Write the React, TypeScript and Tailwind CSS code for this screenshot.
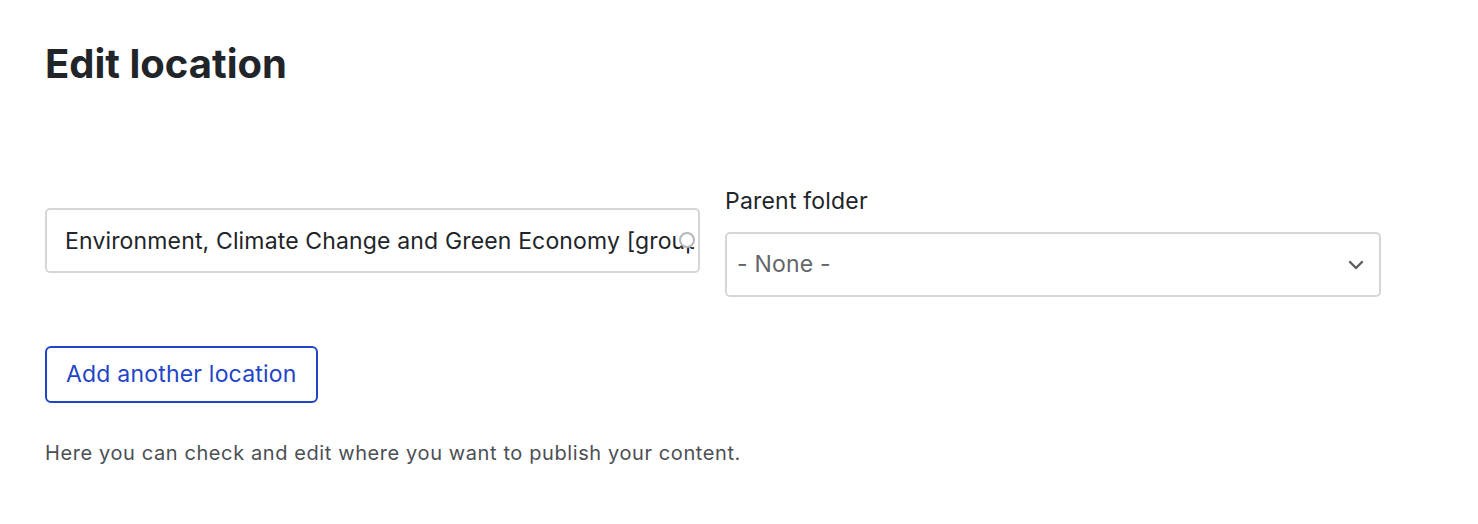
import React from "react";

export default function App() {
  return (
    <div className="min-h-[524px] w-[1478px] bg-white px-[45px] pt-[38px] font-['Inter',sans-serif] text-[#212529]">
      <h1 className="text-[40px] font-bold leading-[52px]">Edit location</h1>
      <div className="mt-[97px] flex items-end gap-[25px]">
        <div className="relative w-[655px]">
          <input
            readOnly
            value="Environment, Climate Change and Green Economy [group]"
            className="h-[65px] w-full rounded-[5px] border-2 border-[#d4d7da] bg-white pl-[18px] pr-[4px] text-[23px] tracking-[0.15px] text-[#212529] outline-none"
          />
          <span className="absolute right-[5px] top-[24px] z-10 h-[16px] w-[16px] rounded-full border-[2.5px] border-[#b5b8bb] bg-white" />
        </div>
        <div className="mb-[-24px] flex w-[656px] flex-col">
          <label className="mb-[17px] text-[23px] leading-[28px] tracking-[0.2px]">Parent folder</label>
          <div className="flex h-[65px] items-center justify-between rounded-[5px] border-2 border-[#d4d7da] bg-white pl-[10px] pr-[14px]">
            <span className="text-[23px] tracking-[0.2px] text-[#636669]">- None -</span>
            <svg width="18" height="12" viewBox="0 0 18 12" fill="none">
              <path d="M3 3l6 6 6-6" stroke="#5a5d60" strokeWidth="2.4" strokeLinecap="round" strokeLinejoin="round" />
            </svg>
          </div>
        </div>
      </div>
      <button className="mt-[73px] h-[57px] rounded-[6px] border-2 border-[#1f45c8] px-[19px] text-[23px] tracking-[0.2px] text-[#1f45c8]">
        Add another location
      </button>
      <p className="mt-[36px] text-[20px] leading-[28px] tracking-[0.6px] text-[#4b4f54]">
        Here you can check and edit where you want to publish your content.
      </p>
    </div>
  );
}
